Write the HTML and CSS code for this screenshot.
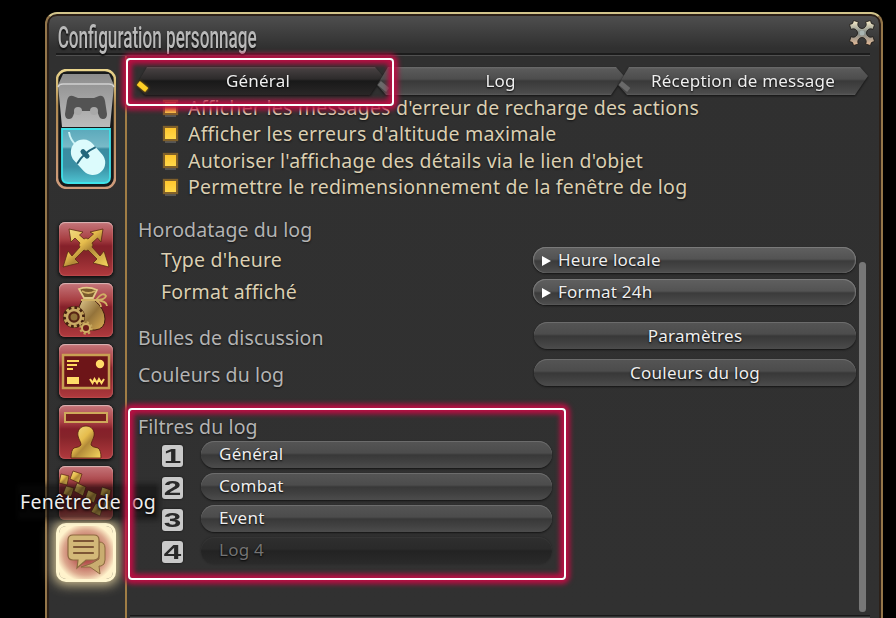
FILE: index.html
```html
<!DOCTYPE html>
<html lang="fr">
<head>
    <meta charset="UTF-8">
    <meta name="viewport" content="width=device-width, initial-scale=1.0">
    <title>Configuration personnage</title>
    <link rel="stylesheet" href="styles.css">
</head>
<body>
    <!-- shared gradients -->
    <svg class="defs" width="0" height="0">
        <defs>
            <linearGradient id="gold" x1="0" y1="0" x2="1" y2="1">
                <stop offset="0" stop-color="#f3df8c"/>
                <stop offset=".4" stop-color="#e6bd4d"/>
                <stop offset=".55" stop-color="#b28a38"/>
                <stop offset="1" stop-color="#f8d95f"/>
            </linearGradient>
            <linearGradient id="bronze" x1="0" y1="0" x2="1" y2="1">
                <stop offset="0" stop-color="#dcc48a"/>
                <stop offset=".5" stop-color="#94733a"/>
                <stop offset="1" stop-color="#deb054"/>
            </linearGradient>
            <linearGradient id="metal" x1="0" y1="0" x2="0" y2="1">
                <stop offset="0" stop-color="#fff2cc"/>
                <stop offset=".5" stop-color="#7f8785"/>
                <stop offset="1" stop-color="#e9bd98"/>
            </linearGradient>
            <linearGradient id="pad" x1="0" y1="0" x2="0" y2="1">
                <stop offset="0" stop-color="#8c8c8c"/>
                <stop offset="1" stop-color="#bcbcbc"/>
            </linearGradient>
            <linearGradient id="aqua" x1="0" y1="0" x2="0" y2="1">
                <stop offset="0" stop-color="#5ba9bb"/>
                <stop offset=".33" stop-color="#78bac8"/>
                <stop offset=".37" stop-color="#3b8ba0"/>
                <stop offset=".7" stop-color="#3a90a4"/>
                <stop offset="1" stop-color="#4fc4d2"/>
            </linearGradient>
            <linearGradient id="frame" x1="0" y1="0" x2="0" y2="1">
                <stop offset="0" stop-color="#ead58d"/>
                <stop offset=".3" stop-color="#b08a52"/>
                <stop offset="1" stop-color="#cf9c7c"/>
            </linearGradient>
        </defs>
    </svg>

    <div class="window">
        <div class="header">
            <h1>Configuration personnage</h1>
            <svg class="close" width="28" height="28" viewBox="0 0 28 28">
                <path fill="url(#metal)" stroke="#1b1713" stroke-width=".8" d="M5.500 1.500 L10.500 3 C8.500 6 11 9.500 14 9.500 C17 9.500 19.500 6 17.500 3 L22.500 1.500 Q22.500 5.500 26.500 5.500 L25 10.500 C22 8.500 18.500 11 18.500 14 C18.500 17 22 19.500 25 17.500 L26.500 22.500 Q22.500 22.500 22.500 26.500 L17.500 25 C19.500 22 17 18.500 14 18.500 C11 18.500 8.500 22 10.500 25 L5.500 26.500 Q5.500 22.500 1.500 22.500 L3 17.500 C6 19.500 9.500 17 9.500 14 C9.500 11 6 8.500 3 10.500 L1.500 5.500 Q5.500 5.500 5.500 1.500 Z"/>
                <circle cx="14" cy="14" r="2.500" fill="#a9b5b2"/>
            </svg>
        </div>

        <div class="body">
            <div class="sidebar">
                <svg class="toggle" width="60" height="120" viewBox="0 0 60 120">
                    <rect x="1" y="1" width="58" height="118" rx="10" fill="#17191a" stroke="url(#frame)" stroke-width="2.500"/>
                    <path fill="url(#pad)" d="M7 5 H53 L58 16 L54 58 H6 L2 16 Z"/>
                    <path fill="none" stroke="#d0d0d0" stroke-width="1.500" d="M2 18 Q3 15 7 15 H53 Q57 15 58 18"/>
                    <path fill="#535353" d="M17 27 Q12 26 11 32 L9 45 Q9 50 13 50 Q16 50 17 47 L19 42 H41 L43 47 Q44 50 47 50 Q51 50 51 45 L49 32 Q48 26 43 27 L38 29 H22 Z"/>
                    <circle cx="22" cy="42" r="4" fill="#a9a9a9"/>
                    <circle cx="38" cy="42" r="4" fill="#a9a9a9"/>
                    <path fill="url(#aqua)" stroke="#3fe3ea" stroke-width="1.800" d="M6 60 H54 V108 Q54 114 48 114 H12 Q6 114 6 108 Z"/>
                    <path fill="none" stroke="#cdf3f6" stroke-width="2" d="M13 63 Q14 71 21 77"/>
                    <g transform="rotate(-42 32 89)">
                        <rect x="20" y="69" width="25" height="39" rx="12.500" fill="#dcfbfc"/>
                        <path fill="none" stroke="#23677c" stroke-width="2" d="M20 86 Q32 82 45 86"/>
                        <path stroke="#23677c" stroke-width="5" stroke-linecap="round" d="M32.500 81 V87"/>
                    </g>
                </svg>

                <div class="menu">
                    <div class="icon">
                        <svg width="54" height="54" viewBox="0 0 54 54" fill="url(#gold)" stroke="#5c2a15" stroke-width=".8">
                            <path d="M10 7 L24 10 L20.500 13 L25 17 Q27 15 29 17 L34.500 12 L31 10 L44 7 L42 20 L38.500 16 L33 21 Q35 23 33 25 L41 34 L45 29 L50 45 L34 41 L38 37 L29 28 Q27 30 25 28 L16 37 L20 41 L4 45 L9 29 L13 34 L21 25 Q19 23 21 21 L16 16 L12 20 Z"/>
                        </svg>
                    </div>
                    <div class="icon">
                        <svg width="54" height="54" viewBox="0 0 54 54">
                            <path fill="url(#bronze)" stroke="#43200f" stroke-width="1" d="M23 17 H35 Q46 26 46 36 Q46 46 36 47 Q26 48 21 42 L20 24 Z"/>
                            <path fill="#7a5a2c" stroke="#e0c887" stroke-width="1.800" d="M20 6 Q29 3 38 7 L34 15 H25 Z"/>
                            <path fill="none" stroke="#d0b064" stroke-width="1.800" d="M23 8 Q29 12 36 8 M22 17 H37 M37 17 Q44 8 47 13 Q46 17 37 17 Q48 18 48 23 M37 18 Q42 20 42 24"/>
                            <circle cx="15" cy="34" r="8.500" fill="none" stroke="#43200f" stroke-width="5"/>
                            <circle cx="15" cy="34" r="9" fill="none" stroke="#c4a35a" stroke-width="3" stroke-dasharray="3 2.650"/>
                            <circle cx="15" cy="34" r="7" fill="#582515" stroke="#c9aa66" stroke-width="2.500"/>
                            <circle cx="15" cy="34" r="3.500" fill="#8f7038"/>
                            <circle cx="27" cy="45" r="5.500" fill="none" stroke="#c4a35a" stroke-width="2.500" stroke-dasharray="2.200 2.120"/>
                            <circle cx="27" cy="45" r="4" fill="#6d1e1a" stroke="#d0b064" stroke-width="2"/>
                        </svg>
                    </div>
                    <div class="icon">
                        <svg width="54" height="54" viewBox="0 0 54 54">
                            <rect x="4" y="11" width="46" height="33" fill="#6d1518" stroke="#c9a052" stroke-width="2.500"/>
                            <path stroke="#ffd95e" stroke-width="2.200" d="M8 17 H20 M8 21 H18 M8 25 H14"/>
                            <rect x="8" y="33" width="12" height="7" fill="#ffdc68"/>
                            <circle cx="41" cy="20" r="4.200" fill="#ffdc68"/>
                            <path fill="none" stroke="#ffdc68" stroke-width="2" d="M31 35 L33.500 39 L35.500 35 L38 39 L40 35 L42.500 39 L45 35"/>
                        </svg>
                    </div>
                    <div class="icon">
                        <svg width="54" height="54" viewBox="0 0 54 54">
                            <rect x="6" y="8" width="42" height="9" fill="#7a2020" stroke="#cfa95a" stroke-width="2"/>
                            <path fill="url(#gold)" stroke="#55200f" stroke-width=".8" d="M27 21 C33 21 36 26 35 31 C34 35 32 37 32 40 Q33 42 39 43 Q42 45 42 53 H12 Q12 45 15 43 Q21 42 22 40 C22 37 20 35 19 31 C18 26 21 21 27 21 Z"/>
                        </svg>
                    </div>
                    <div class="icon">
                        <svg width="54" height="54" viewBox="0 0 54 54" fill="url(#gold)" stroke="#55200f" stroke-width=".7">
                            <path d="M2 8 L10 10 L8 19 L0 17 Z"/>
                            <path d="M14 5 L23 8 L20 17 L11 13 Z"/>
                            <path d="M7 20 L15 22 L12 31 L4 28 Z"/>
                            <path d="M18 17 L27 21 L24 30 L15 25 Z"/>
                            <path d="M29 24 L38 28 L35 37 L26 33 Z"/>
                            <path d="M43 21 L52 24 L50 32 L41 29 Z"/>
                            <path d="M37 37 L44 40 L41 50 L32 46 Z"/>
                            <path d="M45 32 L53 36 L52 45 L44 41 Z"/>
                        </svg>
                    </div>
                    <div class="icon selected">
                        <svg width="54" height="54" viewBox="0 0 54 54">
                            <path fill="#c9ad70" stroke="#8d6a40" stroke-width="1" d="M40 16 Q46 16 46 22 V34 Q46 39 42 40 L40 40 L41 48 L31 41 H22 Q34 38 40 33 Z"/>
                            <path fill="#d3b878" stroke="#8d6a40" stroke-width="1.200" d="M14 9 H35 Q40 9 40 14 V29 Q40 34 35 34 H27 L18 42 L19 34 H14 Q9 34 9 29 V14 Q9 9 14 9 Z"/>
                            <path stroke="#7d5635" stroke-width="2.200" stroke-linecap="round" d="M15 15 H34 M15 21 H34 M15 27 H34"/>
                        </svg>
                    </div>
                </div>
            </div>

            <div class="main">
                <div class="tabs">
                    <div class="tab active"><span>Général</span></div>
                    <div class="tab"><span>Log</span></div>
                    <div class="tab"><span>Réception de message</span></div>
                </div>

                <div class="scroll-area">
                    <div class="content">
                        <ul class="checks">
                            <li><i></i><span>Afficher les messages d'erreur de recharge des actions</span></li>
                            <li><i></i><span>Afficher les erreurs d'altitude maximale</span></li>
                            <li><i></i><span>Autoriser l'affichage des détails via le lien d'objet</span></li>
                            <li><i></i><span>Permettre le redimensionnement de la fenêtre de log</span></li>
                        </ul>

                        <h2 class="stamp">Horodatage du log</h2>
                        <div class="option">
                            <label>Type d'heure</label>
                            <button class="select">Heure locale</button>
                        </div>
                        <div class="option">
                            <label>Format affiché</label>
                            <button class="select">Format 24h</button>
                        </div>

                        <div class="colors">
                            <div class="setting">
                                <h2>Bulles de discussion</h2>
                                <button>Paramètres</button>
                            </div>
                            <div class="setting">
                                <h2>Couleurs du log</h2>
                                <button>Couleurs du log</button>
                            </div>
                        </div>

                        <div class="filters">
                            <h2>Filtres du log</h2>
                            <div class="filter"><b><span>1</span></b><button>Général</button></div>
                            <div class="filter"><b><span>2</span></b><button>Combat</button></div>
                            <div class="filter"><b><span>3</span></b><button>Event</button></div>
                            <div class="filter"><b><span>4</span></b><button disabled>Log 4</button></div>
                        </div>
                    </div>
                    <div class="scrollbar"></div>
                </div>
                <div class="line"></div>
            </div>
        </div>
    </div>

    <div class="tooltip">Fenêtre de log</div>
    <div class="mark mark-tab"></div>
    <div class="mark mark-filters"></div>
</body>
</html>
```

FILE: styles.css
```css
* {
    box-sizing: border-box;
}

body {
    margin: 0;
    height: 618px;
    overflow: hidden;
    position: relative;
    background: #000;
    font-family: "Noto Sans", "Open Sans", sans-serif;
    color: #e9e9e9;
}

.defs {
    position: absolute;
}

.window {
    width: 838px;
    height: 606px;
    margin: 12px 0 0 45px;
    border: 2px solid #94764a;
    border-top-color: #d2c48b;
    border-bottom: 0;
    border-radius: 12px 12px 0 0;
    background: linear-gradient(#505050, #303030 34px, #313131);
    box-shadow: inset 0 2px 0 #2c2018, inset 2px 0 0 #2c2018, inset -2px 0 0 #2c2018;
}

.header {
    display: flex;
    justify-content: space-between;
    height: 42px;
    margin: 0 11px 0 9px;
    border-bottom: 1px solid #505050;
    box-shadow: inset 0 -2px 0 #1c1c1c;
}

.header h1 {
    margin: 0;
    padding-left: 3px;
    width: 380px;
    height: 40px;
    font-family: Roboto, sans-serif;
    font-size: 31px;
    font-weight: 500;
    line-height: 48px;
    white-space: nowrap;
    color: #b9b9b9;
    transform: scaleX(.553);
    transform-origin: 0 0;
    text-shadow: 0 2px 2px #111;
}

.close {
    margin: 5px -6px 0 0;
}

.body {
    display: flex;
}

.sidebar {
    width: 80px;
    height: 562px;
    padding: 13px 0 0 9px;
    border-right: 2px solid #a07d45;
}

.toggle {
    display: block;
}

.menu {
    display: flex;
    flex-direction: column;
    gap: 7px;
    margin: 33px 0 0 3px;
}

.icon {
    width: 54px;
    height: 54px;
    border-radius: 6px;
    overflow: hidden;
    background: linear-gradient(#c5767a, #a84044 17px, #85202a 24px, #86242a 32px, #b03a3e);
    box-shadow: inset 0 1px 1px #d9b6b6, inset 0 0 2px #d06c6c, 0 1px 3px 1px #111;
}

.icon svg {
    display: block;
}

.icon.selected {
    height: 53px;
    margin-top: -1px;
    border-radius: 7px;
    background: radial-gradient(#b3504c 25%, #dca88e 60%, #fff3cc 78%);
    box-shadow: 0 0 0 3px #fff6d0, 0 0 12px 6px #d2c294;
}

.main {
    flex: 1;
    padding-top: 11px;
}

.tabs {
    display: flex;
    margin-left: 9px;
}

.tab {
    display: flex;
    position: relative;
    width: 247px;
    height: 28px;
    margin-right: -6px;
    filter: drop-shadow(0 1px 1px #111);
}

.tab:last-child {
    width: 250px;
}

.tab span {
    flex: 1;
    text-align: center;
    font-size: 17px;
    line-height: 28px;
    letter-spacing: .2px;
    color: #eee;
    background: linear-gradient(#6c6c6c 0, #5a5a5a 2px, #4d4d4d 12px, #393939 14px, #4b4b4b 26px, #5c5c5c);
    clip-path: polygon(0 18px, 11px 0, calc(100% - 8px) 0, 100% 9px, calc(100% - 13px) 100%, 9px 100%);
    text-shadow: 0 1px 2px #000;
}

.tab.active span {
    padding-right: 3px;
    background: linear-gradient(#5a5353 0, #453f40 2px, #2d2b2b 12px, #191919 14px, #292727);
}

.tab::after {
    content: "";
    position: absolute;
    left: 1px;
    top: 17px;
    width: 11px;
    height: 5px;
    background: #6a6a6a;
    transform: rotate(40deg);
}

.tab.active::after {
    background: #fdcf25;
    box-shadow: 0 0 3px #c08a10;
}

.scroll-area {
    display: flex;
    height: 520px;
}

.content {
    width: 730px;
    padding-left: 11px;
}

.checks {
    list-style: none;
    margin: -1px 0 0;
    padding: 0 0 0 27px;
}

.checks li {
    display: flex;
    align-items: center;
    height: 26.5px;
    font-size: 19.5px;
    letter-spacing: .22px;
    white-space: nowrap;
    color: #dbcfb2;
    text-shadow: 0 1px 2px #111;
}

.checks i {
    width: 11px;
    height: 11px;
    margin-right: 12px;
    background: linear-gradient(#ffc62d, #ffd84a);
    box-shadow: 0 0 1px 2px #80602a, 0 4px 0 #555;
}

h2, label {
    margin: 0;
    font-size: 19.5px;
    font-weight: 400;
    letter-spacing: .1px;
    white-space: nowrap;
    color: #b4b4b4;
    text-shadow: 0 1px 2px #111;
}

.stamp {
    margin-top: 16px;
    line-height: 27px;
}

.option, .setting {
    display: flex;
    justify-content: space-between;
    height: 32px;
}

.option {
    padding: 0 0 0 23px;
}

.option label {
    line-height: 34px;
    letter-spacing: .2px;
    color: #dbcfb2;
}

button {
    width: 322px;
    height: 27px;
    margin: 0 1px 0 0;
    padding: 0;
    border: 0;
    border-radius: 14px;
    font: 17px/25px "Noto Sans", "Open Sans", sans-serif;
    letter-spacing: .25px;
    color: #eee;
    background: linear-gradient(#555, #4c4c4c 12px, #383838 14px, #424242 21px, #4c4c4c);
    box-shadow: inset 0 1px 0 #6c6c6c, 0 1px 2px #141414;
    text-shadow: 0 1px 2px #000;
}

.select {
    width: 323px;
    height: 26px;
    margin-top: 4px;
    padding-bottom: 2px;
    text-align: left;
    background: linear-gradient(#606060, #535353 12px, #3b3b3b 14px, #444 20px, #505050);
    box-shadow: inset 0 1px 0 #7a7a7a, inset 1px 0 1px #777, inset -1px 0 1px #777, 0 1px 2px #141414;
}

.select::before {
    content: "";
    display: inline-block;
    margin: 0 7px 0 9px;
    border-left: 9px solid #fff;
    border-top: 5.5px solid transparent;
    border-bottom: 5.5px solid transparent;
}

.colors {
    margin-top: 11px;
}

.setting {
    height: 37px;
}

.setting h2 {
    line-height: 40px;
}

.setting button {
    margin-top: 4px;
}

.filters {
    margin-top: 21px;
}

.filters h2 {
    line-height: 27px;
    height: 28px;
}

.filter {
    display: flex;
    height: 32px;
    padding-left: 24px;
}

.filter b {
    width: 21px;
    height: 22px;
    margin: 4px 18px 0 0;
    border-radius: 3px;
    background: #c9c9c9;
    color: #292929;
    font: bold 21px/22px "Liberation Sans", sans-serif;
    text-align: center;
    box-shadow: 0 0 2px #111;
}

.filter b span {
    display: block;
    transform: scaleX(1.5);
}

.filter button {
    width: 351px;
    padding: 0 0 3px 18px;
    text-align: left;
}

.filter button:disabled {
    color: #747474;
    background: linear-gradient(#2f2f2f, #2a2a2a 12px, #232323 14px, #2a2a2a);
    box-shadow: inset 0 1px 0 #353535, 0 0 2px #222;
}

.scrollbar {
    width: 7px;
    height: 350px;
    margin: 167px 0 0 2px;
    border-radius: 4px;
    background: #777;
    box-shadow: 0 0 1px #444;
}

.line {
    height: 3px;
    margin: 0 11px 0 3px;
    border-top: 1px solid #181818;
    border-bottom: 1px solid #585858;
}

.tooltip {
    position: absolute;
    left: 20px;
    top: 487px;
    font-size: 19.5px;
    line-height: 30px;
    letter-spacing: .3px;
    white-space: nowrap;
    color: #eee;
    background: rgba(10, 10, 10, .5);
    box-shadow: 0 0 5px 3px rgba(10, 10, 10, .5);
    text-shadow: 0 0 3px #000, 0 1px 3px #000;
}

/* highlights over the window */
.mark {
    position: absolute;
    border: 2px solid #fff;
    border-radius: 4px;
    box-shadow: 0 0 5px 4px #b90f43, inset 0 0 5px 4px #b90f43;
}

.mark-tab {
    left: 126px;
    top: 58px;
    width: 268px;
    height: 48px;
}

.mark-filters {
    left: 128px;
    top: 408px;
    width: 438px;
    height: 172px;
}
```
